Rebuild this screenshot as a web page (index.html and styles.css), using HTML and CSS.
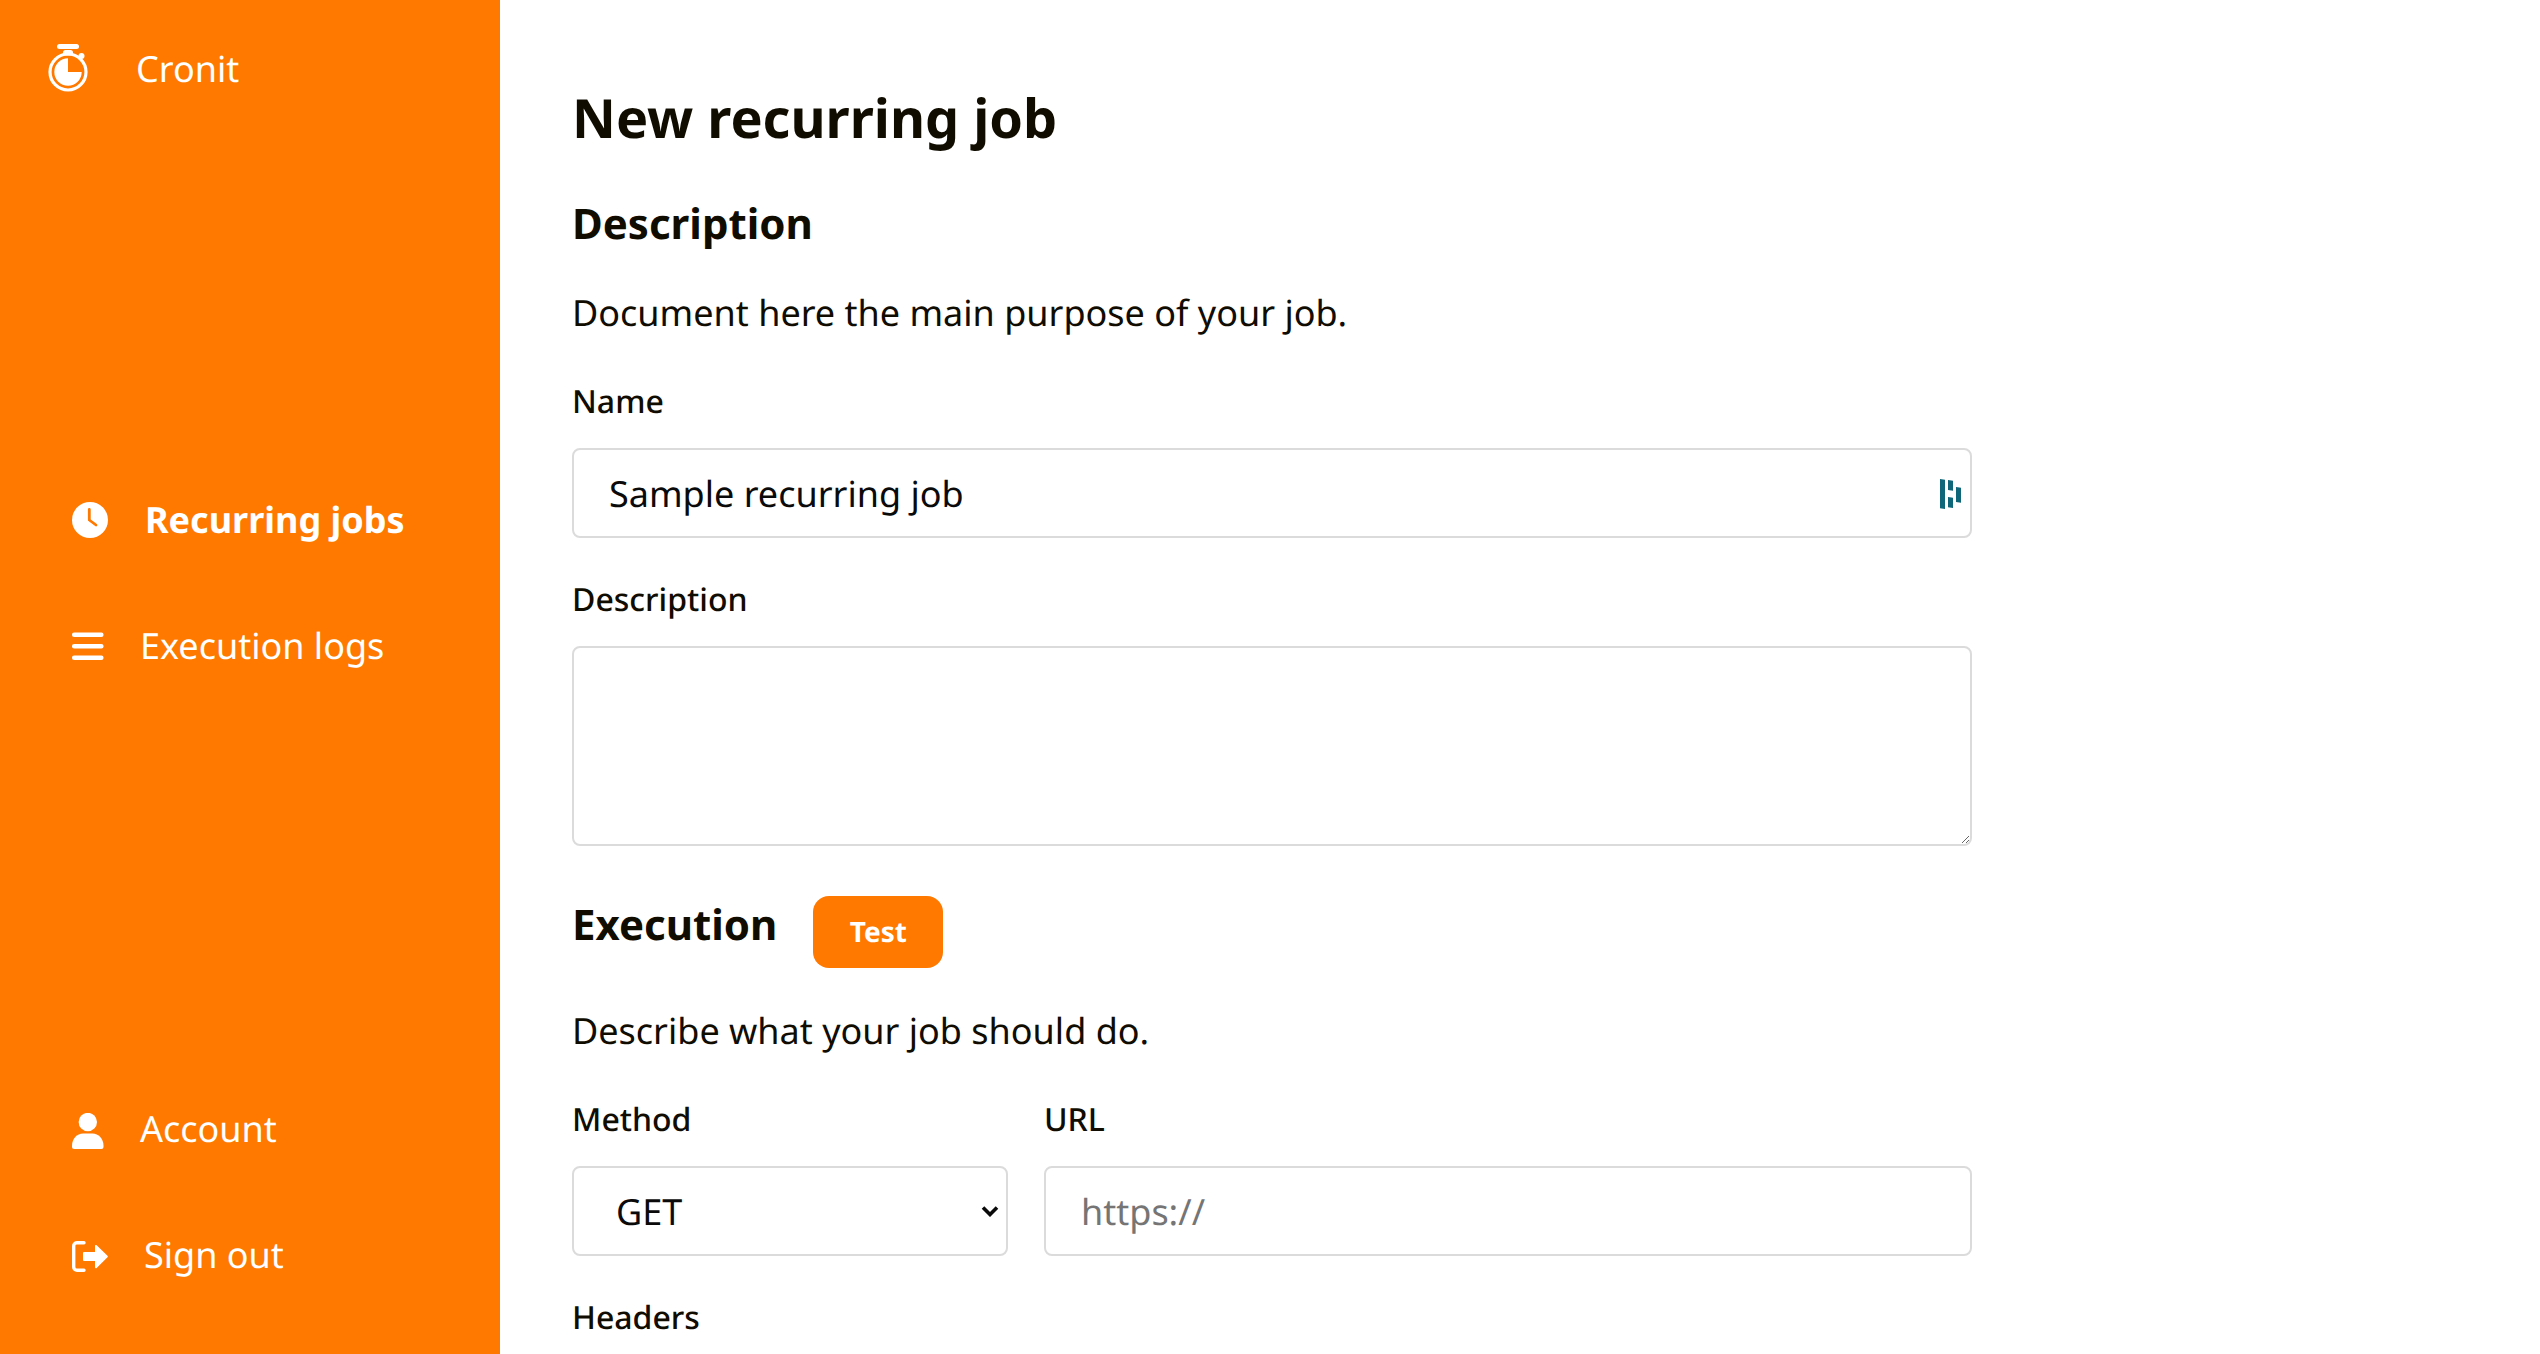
FILE: index.html
```html
<!DOCTYPE html>
<html lang="en">
<head>
<meta charset="utf-8">
<title>Cronit</title>
<link rel="stylesheet" href="styles.css">
</head>
<body>
<div class="app">
  <aside class="sidebar">
    <a class="brand">
      <svg class="brand-icon" viewBox="0 0 42 50" width="42" height="50" aria-hidden="true">
        <rect x="10" y="0" width="22" height="5" rx="2.5" fill="#fff"/>
        <path d="M16 11.500V8.500a2.500 2.500 0 0 1 2.500-2.500h5a2.500 2.500 0 0 1 2.500 2.500v3z" fill="#fff"/>
        <circle cx="34.500" cy="12" r="3" fill="#fff"/>
        <circle cx="21" cy="28" r="18" fill="none" stroke="#fff" stroke-width="3.200"/>
        <path d="M21 14.300A13.700 13.700 0 1 0 34.700 28H21Z" fill="#fff"/>
      </svg>
      <span>Cronit</span>
    </a>
    <nav class="nav nav-main">
      <a class="nav-item active">
        <svg class="icon" viewBox="0 0 36 36" width="36" height="36" aria-hidden="true">
          <circle cx="18" cy="18" r="18" fill="#fff"/>
          <path d="M17.300 7.500V18L24 23" fill="none" stroke="#ff7900" stroke-width="2.800" stroke-linecap="round" stroke-linejoin="round"/>
        </svg>
        <span class="label-a">Recurring jobs</span>
      </a>
      <a class="nav-item">
        <svg class="icon" viewBox="0 0 32 28" width="32" height="28" aria-hidden="true">
          <rect x="0" y="0.500" width="31.500" height="4.500" rx="2" fill="#fff"/>
          <rect x="0" y="12" width="31.500" height="4.500" rx="2" fill="#fff"/>
          <rect x="0" y="23.500" width="31.500" height="4.500" rx="2" fill="#fff"/>
        </svg>
        <span class="label-b">Execution logs</span>
      </a>
    </nav>
    <nav class="nav nav-foot">
      <a class="nav-item">
        <svg class="icon" viewBox="0 0 32 36" width="32" height="36" aria-hidden="true">
          <circle cx="15.800" cy="9" r="9.200" fill="#fff"/>
          <path d="M0 32.500C0 26 5 20.500 11 20.500h9.500c6 0 11 5.500 11 12v1.500a2 2 0 0 1-2 2H2a2 2 0 0 1-2-2z" fill="#fff"/>
        </svg>
        <span class="label-b">Account</span>
      </a>
      <a class="nav-item">
        <svg class="icon" viewBox="0 0 36 32" width="36" height="32" aria-hidden="true">
          <path d="M12 1.700H5a3.300 3.300 0 0 0-3.300 3.300v21A3.300 3.300 0 0 0 5 29.300h7" fill="none" stroke="#fff" stroke-width="3.400" stroke-linecap="round"/>
          <path d="M12 11h11V5a1 1 0 0 1 1.700-.8l10.800 10.500a1.200 1.200 0 0 1 0 1.600L24.700 27a1 1 0 0 1-1.700-.8V20H12a1 1 0 0 1-1-1v-7a1 1 0 0 1 1-1z" fill="#fff"/>
        </svg>
        <span class="label-c">Sign out</span>
      </a>
    </nav>
  </aside>
  <main class="main">
    <h1 class="title">New recurring job</h1>
    <h2 class="section">Description</h2>
    <p class="lead">Document here the main purpose of your job.</p>
    <div class="form">
      <label class="label" for="job-name">Name</label>
      <div class="input-wrap">
        <input class="input" id="job-name" type="text" value="Sample recurring job">
        <svg class="dashlane" viewBox="0 0 22 30" width="22" height="30" aria-hidden="true">
          <path d="M0 0l5 .7V30l-5-.7zM8 1l5 .7v10l-5-.7zM8 18l5 .7V29l-5-.7zM16 8l5 .7v15l-5-.7z" fill="#0e6678"/>
        </svg>
      </div>
      <label class="label label-next" for="job-desc">Description</label>
      <textarea class="textarea" id="job-desc"></textarea>
    </div>
    <div class="section-row">
      <h2 class="section">Execution</h2>
      <button class="btn" type="button">Test</button>
    </div>
    <p class="lead lead-exec">Describe what your job should do.</p>
    <div class="form">
      <div class="request">
        <div class="field">
          <label class="label" for="job-method">Method</label>
          <div class="select-wrap">
            <select class="select" id="job-method">
              <option>GET</option>
              <option>POST</option>
              <option>PUT</option>
              <option>DELETE</option>
            </select>
            <svg class="chevron" viewBox="0 0 18 12" width="18" height="12" aria-hidden="true">
              <path d="M2 2.500l7 7 7-7" fill="none" stroke="#0a0a0a" stroke-width="3.600"/>
            </svg>
          </div>
        </div>
        <div class="field">
          <label class="label" for="job-url">URL</label>
          <input class="input" id="job-url" type="text" placeholder="https://">
        </div>
      </div>
      <label class="label label-next">Headers</label>
    </div>
  </main>
</div>
</body>
</html>
```

FILE: styles.css
```css
* { box-sizing: border-box; }
html, body { margin: 0; height: 100%; overflow: hidden; }
body {
  font-family: "Noto Sans", sans-serif;
  font-size: 36px;
  color: #100c00;
  background: #fff;
  text-rendering: geometricPrecision;
}
.app { display: flex; height: 100vh; }

.sidebar {
  width: 500px;
  flex: none;
  background: #ff7900;
  color: #fff;
  display: flex;
  flex-direction: column;
  padding: 44px 0 0 47px;
}
.brand { display: flex; align-items: center; height: 50px; font-size: 36px; }
.brand-icon { margin-right: 47px; flex: none; }
.brand span { margin-bottom: 2px; }

.nav { display: flex; flex-direction: column; gap: 76px; margin-left: 25px; }
.nav-main { margin-top: 401px; }
.nav-foot { margin-top: auto; margin-bottom: 72px; }
.nav-item { display: flex; align-items: center; height: 50px; }
.nav-main span { margin-bottom: 1px; }
.nav-foot span { margin-bottom: 5px; }
.icon { flex: none; }
.active { font-weight: 700; }
.label-a { margin-left: 37px; }
.label-b { margin-left: 36px; }
.label-c { margin-left: 36px; }

.main { flex: 1; padding: 80px 0 0 72px; min-width: 0; }
.title { font-size: 54px; line-height: 74px; font-weight: 700; margin: 0 0 2px; }
.section { font-size: 42px; line-height: 60px; font-weight: 700; margin: 0; }
.title + .section { margin-top: 40px; }
.lead { margin: 34px 0 0; line-height: 50px; }
.form { width: 1400px; }
.label { display: block; font-size: 32px; line-height: 44px; font-weight: 500; margin: 42px 0 24px; }
.label-next { margin-top: 40px; }

.input-wrap, .select-wrap { position: relative; }
.input, .select, .textarea {
  display: block;
  width: 100%;
  font: inherit;
  color: #0a0a0a;
  background: #fff;
  border: 2px solid #dbdbdb;
  border-radius: 8px;
  outline: none;
  text-rendering: inherit;
}
.input { height: 90px; padding: 0 35px; }
.select { height: 90px; padding: 0 42px; appearance: none; }
.textarea { height: 200px; padding: 20px 35px; resize: vertical; }
.dashlane { position: absolute; right: 10px; top: 31px; }
.chevron { position: absolute; right: 9px; top: 39px; pointer-events: none; }

.section-row { display: flex; align-items: flex-start; gap: 36px; margin-top: 50px; }
.section-row .section { line-height: 58px; }
.btn {
  width: 130px;
  height: 72px;
  border: 0;
  border-radius: 16px;
  background: #ff7900;
  color: #fff;
  font: 700 28px "Noto Sans", sans-serif;
  text-rendering: inherit;
}
.lead-exec { margin-top: 38px; }
.request { display: grid; grid-template-columns: 436px 1fr; column-gap: 36px; }
.field { min-width: 0; }
```
